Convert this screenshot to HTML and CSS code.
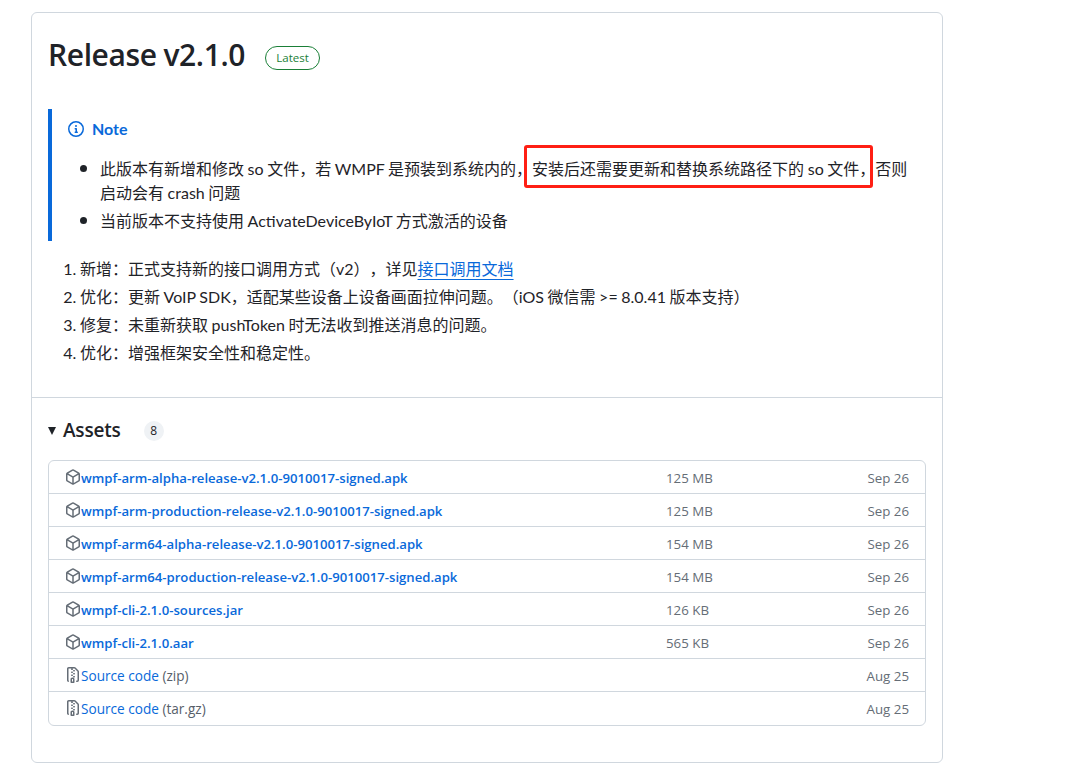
FILE: index.html
```html
<!DOCTYPE html>
<html lang="zh-CN">
<head>
<meta charset="utf-8">
<title>Release v2.1.0</title>
<link rel="stylesheet" href="styles.css">
</head>
<body>
<svg class="defs" width="0" height="0" aria-hidden="true">
  <symbol id="pkg" viewBox="0 0 16 16"><path fill="currentColor" d="m8.878.392 5.25 3.045c.54.314.872.89.872 1.514v6.098a1.75 1.75 0 0 1-.872 1.514l-5.25 3.045a1.75 1.75 0 0 1-1.756 0l-5.25-3.045A1.75 1.75 0 0 1 1 11.049V4.951c0-.624.332-1.201.872-1.514L7.122.392a1.75 1.75 0 0 1 1.756 0ZM7.875 1.69l-4.63 2.685L8 7.133l4.755-2.758-4.63-2.685a.248.248 0 0 0-.25 0ZM2.5 5.677v5.372c0 .09.047.171.125.216l4.625 2.683V8.432Zm6.25 8.271 4.625-2.683a.25.25 0 0 0 .125-.216V5.677L8.75 8.432Z"/></symbol>
  <symbol id="zip" viewBox="0 0 16 16"><path fill="currentColor" d="M3.5 1.75v11.5c0 .09.048.173.126.217a.75.75 0 0 1-.752 1.298A1.748 1.748 0 0 1 2 13.25V1.75C2 .784 2.784 0 3.75 0h5.586c.464 0 .909.185 1.237.513l2.914 2.914c.329.328.513.773.513 1.237v8.586A1.75 1.75 0 0 1 12.25 15h-.5a.75.75 0 0 1 0-1.5h.5a.25.25 0 0 0 .25-.25V4.664a.25.25 0 0 0-.073-.177L9.513 1.573a.25.25 0 0 0-.177-.073H7.25a.75.75 0 0 1 0 1.5h-.5a.75.75 0 0 1 0-1.5h-3a.25.25 0 0 0-.25.25Zm3.75 8.75h.5c.966 0 1.75.784 1.75 1.75v3a.75.75 0 0 1-.75.75h-2.5a.75.75 0 0 1-.75-.75v-3c0-.966.784-1.75 1.75-1.75ZM6 5.25a.75.75 0 0 1 .75-.75h.5a.75.75 0 0 1 0 1.5h-.5A.75.75 0 0 1 6 5.25Zm.75 2.25h.5a.75.75 0 0 1 0 1.5h-.5a.75.75 0 0 1 0-1.5ZM8 6.75A.75.75 0 0 1 8.75 6h.5a.75.75 0 0 1 0 1.5h-.5A.75.75 0 0 1 8 6.75ZM8.75 3h.5a.75.75 0 0 1 0 1.5h-.5a.75.75 0 0 1 0-1.5ZM8 9.75A.75.75 0 0 1 8.75 9h.5a.75.75 0 0 1 0 1.5h-.5A.75.75 0 0 1 8 9.75Zm-1 2.5v2.25h1v-2.25a.25.25 0 0 0-.25-.25h-.5a.25.25 0 0 0-.25.25Z"/></symbol>
</svg>
<main class="card">
  <section class="body">
    <header class="title-row">
      <h1 class="title">Release v2.1.0</h1>
      <span class="label">Latest</span>
    </header>
    <div class="markdown">
      <div class="note">
        <p class="note-title">
          <svg class="note-icon" viewBox="0 0 16 16" width="16" height="16"><path fill="currentColor" d="M0 8a8 8 0 1 1 16 0A8 8 0 0 1 0 8Zm8-6.5a6.5 6.5 0 1 0 0 13 6.5 6.5 0 0 0 0-13ZM6.5 7.75A.75.75 0 0 1 7.25 7h1a.75.75 0 0 1 .75.75v2.75h.25a.75.75 0 0 1 0 1.5h-2a.75.75 0 0 1 0-1.5h.25v-2h-.25a.75.75 0 0 1-.75-.75ZM8 6a1 1 0 1 1 0-2 1 1 0 0 1 0 2Z"/></svg>
          Note
        </p>
        <ul class="note-list">
          <li>此版本有新增和修改 so 文件，若 WMPF 是预装到系统内的，<span class="marked">安装后还需要更新和替换系统路径下的 so 文件，</span>否则启动会有 crash 问题</li>
          <li>当前版本不支持使用 ActivateDeviceByIoT 方式激活的设备</li>
        </ul>
      </div>
      <ol class="changes">
        <li>新增：正式支持新的接口调用方式（v2），详见<a class="doc-link" href="#">接口调用文档</a></li>
        <li>优化：更新 VoIP SDK，适配某些设备上设备画面拉伸问题。（iOS 微信需 &gt;= 8.0.41 版本支持）</li>
        <li>修复：未重新获取 pushToken 时无法收到推送消息的问题。</li>
        <li>优化：增强框架安全性和稳定性。</li>
      </ol>
    </div>
  </section>
  <section class="assets">
    <div class="assets-head">
      <span class="caret"></span>
      <h2 class="assets-title">Assets</h2>
      <span class="counter">8</span>
    </div>
    <ul class="asset-list">
      <li class="asset"><span class="asset-name"><svg class="asset-icon"><use href="#pkg"/></svg><a href="#">wmpf-arm-alpha-release-v2.1.0-9010017-signed.apk</a></span><span class="asset-size">125 MB</span><span class="asset-date">Sep 26</span></li>
      <li class="asset"><span class="asset-name"><svg class="asset-icon"><use href="#pkg"/></svg><a href="#">wmpf-arm-production-release-v2.1.0-9010017-signed.apk</a></span><span class="asset-size">125 MB</span><span class="asset-date">Sep 26</span></li>
      <li class="asset"><span class="asset-name"><svg class="asset-icon"><use href="#pkg"/></svg><a href="#">wmpf-arm64-alpha-release-v2.1.0-9010017-signed.apk</a></span><span class="asset-size">154 MB</span><span class="asset-date">Sep 26</span></li>
      <li class="asset"><span class="asset-name"><svg class="asset-icon"><use href="#pkg"/></svg><a href="#">wmpf-arm64-production-release-v2.1.0-9010017-signed.apk</a></span><span class="asset-size">154 MB</span><span class="asset-date">Sep 26</span></li>
      <li class="asset"><span class="asset-name"><svg class="asset-icon"><use href="#pkg"/></svg><a href="#">wmpf-cli-2.1.0-sources.jar</a></span><span class="asset-size">126 KB</span><span class="asset-date">Sep 26</span></li>
      <li class="asset"><span class="asset-name"><svg class="asset-icon"><use href="#pkg"/></svg><a href="#">wmpf-cli-2.1.0.aar</a></span><span class="asset-size">565 KB</span><span class="asset-date">Sep 26</span></li>
      <li class="asset"><span class="asset-name"><svg class="asset-icon"><use href="#zip"/></svg><a class="source" href="#">Source code <span class="ext">(zip)</span></a></span><span class="asset-size"></span><span class="asset-date">Aug 25</span></li>
      <li class="asset"><span class="asset-name"><svg class="asset-icon"><use href="#zip"/></svg><a class="source" href="#">Source code <span class="ext">(tar.gz)</span></a></span><span class="asset-size"></span><span class="asset-date">Aug 25</span></li>
    </ul>
  </section>
</main>
</body>
</html>
```

FILE: styles.css
```css
* { box-sizing: border-box; }
html, body { margin: 0; background: #fff; }
body {
  padding: 12px 0 0 31px;
  font-family: "Lato", "Noto Sans CJK SC", sans-serif;
  font-size: 16px;
  line-height: 28px;
  color: #1f2328;
  text-spacing-trim: space-all;
  word-spacing: -.5px;
}
.defs { position: absolute; }
.card {
  width: 912px;
  height: 751px;
  border: 1px solid #d0d7de;
  border-radius: 6px;
}
.body {
  height: 385px;
  padding: 16px 16px 0;
  border-bottom: 1px solid #d0d7de;
}
.title-row { display: flex; align-items: center; height: 52px; }
.title {
  margin: 0;
  font-family: "Open Sans", sans-serif;
  font-size: 30px;
  font-weight: 600;
  line-height: 52px;
  letter-spacing: -.4px;
}
.label {
  margin: 5px 0 0 20px;
  width: 55px;
  height: 24px;
  border: 1px solid #1a7f37;
  border-radius: 12px;
  color: #1a7f37;
  font-family: "Open Sans", sans-serif;
  font-size: 11.5px;
  font-weight: 500;
  line-height: 22px;
  text-align: center;
}
.markdown { margin-top: 28px; }
.note {
  height: 132px;
  padding: 8px 8px 0 16px;
  border-left: 4px solid #0969da;
}
.note-title {
  display: flex;
  align-items: center;
  gap: 8px;
  margin: 0 0 14px;
  color: #0969da;
  font-weight: 700;
  height: 24px;
  line-height: 24px;
}
.note-icon { flex: none; }
.note-list { margin: 0; padding: 0 0 0 32px; line-height: 24px; }
.note-list li + li { margin-top: 2px; }
.note-list li::marker { font-size: 20px; }
.marked { position: relative; }
.marked::after {
  content: "";
  position: absolute;
  left: -8px;
  right: 2px;
  top: -14px;
  bottom: -10px;
  border: 3px solid #ff1f14;
  border-radius: 3px;
}
.changes { margin: 14px 0 0; padding: 0 0 0 32px; }
.doc-link { color: #0969da; text-decoration: underline; text-underline-offset: 4px; }
.assets { padding: 16px; }
.assets-head { display: flex; align-items: center; height: 32px; margin-bottom: 14px; }
.caret {
  width: 0;
  height: 0;
  margin: 2px 7px 0 0;
  border-left: 4.5px solid transparent;
  border-right: 4.5px solid transparent;
  border-top: 8px solid #1f2328;
}
.assets-title {
  margin: 0;
  font-family: "Open Sans", sans-serif;
  font-size: 19px;
  font-weight: 600;
  line-height: 32px;
  letter-spacing: -.2px;
}
.counter {
  margin: 2px 0 0 23px;
  width: 20px;
  height: 20px;
  border-radius: 10px;
  background: #eff2f5;
  font-family: "Open Sans", sans-serif;
  font-size: 12px;
  line-height: 20px;
  text-align: center;
}
.asset-list {
  list-style: none;
  margin: 0;
  padding: 0;
  border: 1px solid #d0d7de;
  border-radius: 6px;
}
.asset {
  display: grid;
  grid-template-columns: 601px 1fr auto;
  align-items: center;
  height: 33px;
  padding: 1px 16px 0;
  line-height: 32px;
  color: #656d76;
  font-family: "Open Sans", sans-serif;
  font-size: 13.3px;
  word-spacing: 0;
}
.asset + .asset { border-top: 1px solid #d0d7de; }
.asset:first-child { height: 32px; }
.asset:last-child { height: 34px; padding-bottom: 1px; }
.asset-name { display: flex; align-items: center; font-size: 13.15px; }
.asset-name a { color: #0969da; font-weight: 600; text-decoration: none; }
.asset-name .source { font-size: 13.6px; font-weight: 500; }
.asset-name .ext { color: #57606a; font-weight: 400; }
.asset-icon { width: 16px; height: 16px; flex: none; margin-top: -2px; color: #656d76; }
```
